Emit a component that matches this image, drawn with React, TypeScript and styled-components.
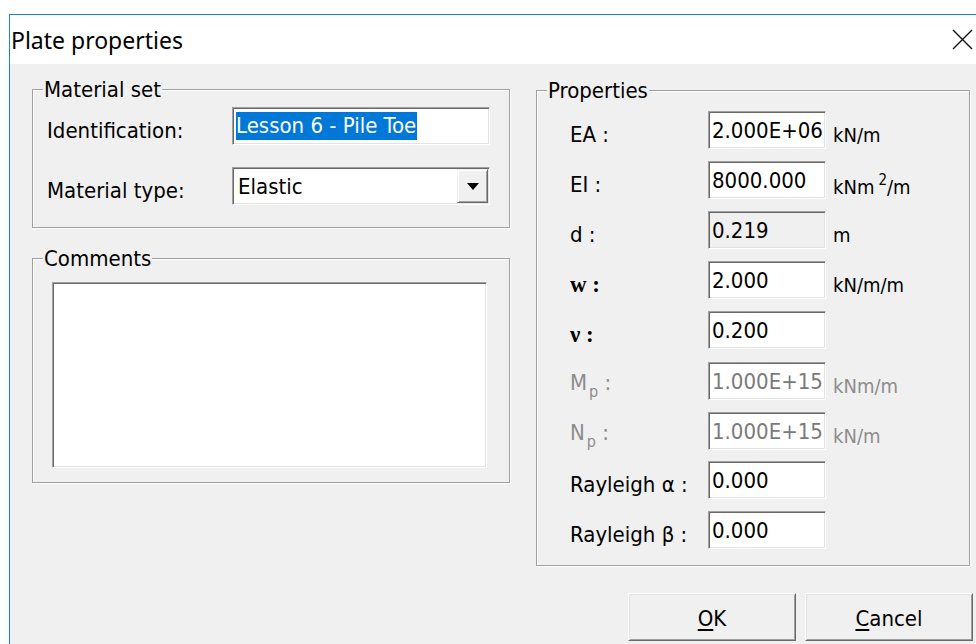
import React from "react";
import styled, { createGlobalStyle } from "styled-components";

const GlobalStyle = createGlobalStyle`
  html, body {
    margin: 0;
    padding: 0;
    background: #ffffff;
    overflow: hidden;
  }
  * { box-sizing: border-box; }
`;

const UI_FONT = `"DejaVu Sans Condensed", "DejaVu Sans", sans-serif`;

const Screen = styled.div`
  width: 976px;
  height: 644px;
  padding: 14px 0 0 9px;
  background: #ffffff;
  overflow: hidden;
`;

const Window = styled.div`
  width: 1000px;
  height: 700px;
  border-left: 1px solid #1883d7;
  border-top: 1px solid #1883d7;
  background: #f0f0f0;
  font-family: ${UI_FONT};
  font-size: 22px;
  color: #000;
`;

const TitleBar = styled.div`
  height: 49px;
  background: #ffffff;
  display: flex;
  align-items: center;
  padding-left: 1px;
  width: 966px;
  justify-content: space-between;
`;

const Title = styled.span`
  font-family: "Noto Sans", "Open Sans", sans-serif;
  font-size: 23px;
  color: #000;
`;

const CloseButton = styled.div`
  width: 22px;
  height: 22px;
  margin-right: 3px;
  display: flex;
  align-items: center;
  justify-content: center;
`;

const Body = styled.div`
  display: grid;
  grid-template-columns: 478px 434px;
  column-gap: 26px;
  padding: 25px 0 0 22px;
  align-items: start;
`;

const Column = styled.div`
  display: flex;
  flex-direction: column;
  gap: ${(p: { $gap: number }) => p.$gap}px;
`;

const Group = styled.div<{ $pad: string; $offset?: number }>`
  position: relative;
  border: 1px solid #a0a0a0;
  box-shadow: inset 1px 1px 0 #ffffff, 1px 1px 0 #ffffff;
  padding: ${(p) => p.$pad};
  margin-top: ${(p) => p.$offset ?? 0}px;
`;

const Legend = styled.span`
  position: absolute;
  top: -11px;
  left: 10px;
  padding: 0 1px;
  background: #f0f0f0;
  line-height: 22px;
`;

const Row = styled.div<{ $label: number }>`
  display: grid;
  grid-template-columns: ${(p) => p.$label}px auto 1fr;
  align-items: center;
  height: 38px;
`;

const Label = styled.span<{ $disabled?: boolean }>`
  padding-top: 9px;
  color: ${(p) => (p.$disabled ? "#8c8c8c" : "#000")};
  white-space: nowrap;
`;

const SymbolLabel = styled(Label)`
  font-family: "Liberation Serif", serif;
  font-weight: bold;
  font-size: 23px;
`;

const Sub = styled.sub`
  font-size: 16px;
  vertical-align: -7px;
  margin-left: 2px;
`;

const Sunken = styled.div<{ $w: number; $h?: number; $bg?: string; $muted?: boolean }>`
  width: ${(p) => p.$w}px;
  height: ${(p) => p.$h ?? 38}px;
  background: ${(p) => p.$bg ?? "#ffffff"};
  color: ${(p) => (p.$muted ? "#7a7a7a" : "#000")};
  border-top: 1px solid #a0a0a0;
  border-left: 1px solid #a0a0a0;
  border-right: 1px solid #ffffff;
  border-bottom: 1px solid #ffffff;
  box-shadow: inset 1px 1px 0 #696969, inset -1px -1px 0 #e3e3e3;
  display: flex;
  align-items: center;
  padding: 0 2px 0 3px;
  white-space: nowrap;
  overflow: hidden;
`;

const Selected = styled.span`
  background: #0078d7;
  color: #ffffff;
  line-height: 28px;
  padding-right: 1px;
`;

const ComboText = styled.span`
  flex: 1;
  padding-left: 2px;
`;

const DropButton = styled.div`
  width: 31px;
  height: 34px;
  margin-right: -1px;
  background: #f0f0f0;
  border-top: 1px solid #f0f0f0;
  border-left: 1px solid #f0f0f0;
  border-right: 1px solid #696969;
  border-bottom: 1px solid #696969;
  box-shadow: inset 1px 1px 0 #ffffff, inset -1px -1px 0 #a0a0a0;
  display: flex;
  align-items: center;
  justify-content: center;
`;

const Unit = styled.span<{ $disabled?: boolean }>`
  padding: 9px 0 0 7px;
  font-size: 20px;
  color: ${(p) => (p.$disabled ? "#8c8c8c" : "#000")};
  white-space: nowrap;
`;

const Sup = styled.sup`
  font-size: 15px;
  vertical-align: 9px;
  margin-left: 4px;
`;

const Rows = styled.div`
  display: flex;
  flex-direction: column;
  gap: ${(p: { $gap: number }) => p.$gap}px;
`;

const ButtonBar = styled.div`
  display: flex;
  justify-content: flex-end;
  gap: 9px;
  margin: 27px -3px 0 0;
`;

const Button = styled.div`
  width: 168px;
  height: 48px;
  background: #f0f0f0;
  border-top: 1px solid #ffffff;
  border-left: 1px solid #ffffff;
  border-right: 1px solid #696969;
  border-bottom: 1px solid #696969;
  box-shadow: inset 1px 1px 0 #e3e3e3, inset -1px -1px 0 #a0a0a0;
  display: flex;
  align-items: center;
  justify-content: center;
  padding-top: 2px;
`;

const Key = styled.span`
  text-decoration: underline;
  text-underline-offset: 3px;
`;

type Prop = {
  label: React.ReactNode;
  value: string;
  unit?: React.ReactNode;
  disabled?: boolean;
  readOnly?: boolean;
  symbol?: boolean;
};

const properties: Prop[] = [
  { label: "EA :", value: "2.000E+06", unit: "kN/m" },
  {
    label: "EI :",
    value: "8000.000",
    unit: (
      <>
        kNm<Sup>2</Sup>/m
      </>
    ),
  },
  { label: "d :", value: "0.219", unit: "m", readOnly: true },
  { label: "w :", value: "2.000", unit: "kN/m/m", symbol: true },
  { label: "ν :", value: "0.200", symbol: true },
  {
    label: (
      <>
        M<Sub>p</Sub> :
      </>
    ),
    value: "1.000E+15",
    unit: "kNm/m",
    disabled: true,
  },
  {
    label: (
      <>
        N<Sub>p</Sub> :
      </>
    ),
    value: "1.000E+15",
    unit: "kN/m",
    disabled: true,
  },
  { label: "Rayleigh α :", value: "0.000" },
  { label: "Rayleigh β :", value: "0.000" },
];

export default function App() {
  return (
    <Screen>
      <GlobalStyle />
      <Window>
        <TitleBar>
          <Title>Plate properties</Title>
          <CloseButton>
            <svg width="21" height="21" viewBox="0 0 21 21">
              <path d="M1 1 L20 20 M20 1 L1 20" stroke="#111" strokeWidth="1.4" />
            </svg>
          </CloseButton>
        </TitleBar>
        <Body>
          <Column $gap={30}>
            <Group $pad="17px 19px 22px 14px">
              <Legend>Material set</Legend>
              <Rows $gap={22}>
                <Row $label={185}>
                  <Label>Identification:</Label>
                  <Sunken $w={258}>
                    <Selected>Lesson 6 - Pile Toe</Selected>
                  </Sunken>
                </Row>
                <Row $label={185}>
                  <Label>Material type:</Label>
                  <Sunken $w={258}>
                    <ComboText>Elastic</ComboText>
                    <DropButton>
                      <svg width="12" height="7" viewBox="0 0 12 7">
                        <path d="M0 0 H12 L6 7 Z" fill="#000" />
                      </svg>
                    </DropButton>
                  </Sunken>
                </Row>
              </Rows>
            </Group>
            <Group $pad="23px 22px 14px 19px">
              <Legend>Comments</Legend>
              <Sunken $w={435} $h={186} />
            </Group>
          </Column>
          <Column $gap={0}>
            <Group $pad="20px 0 16px 33px" $offset={1}>
              <Legend>Properties</Legend>
              <Rows $gap={12}>
                {properties.map((p, i) => {
                  const LabelKind = p.symbol ? SymbolLabel : Label;
                  return (
                    <Row $label={138} key={i}>
                      <LabelKind $disabled={p.disabled}>{p.label}</LabelKind>
                      <Sunken
                        $w={118}
                        $bg={p.readOnly ? "#f0f0f0" : "#ffffff"}
                        $muted={p.disabled}
                      >
                        {p.value}
                      </Sunken>
                      {p.unit ? <Unit $disabled={p.disabled}>{p.unit}</Unit> : <span />}
                    </Row>
                  );
                })}
              </Rows>
            </Group>
            <ButtonBar>
              <Button>
                <span>
                  <Key>O</Key>K
                </span>
              </Button>
              <Button>
                <span>
                  <Key>C</Key>ancel
                </span>
              </Button>
            </ButtonBar>
          </Column>
        </Body>
      </Window>
    </Screen>
  );
}
